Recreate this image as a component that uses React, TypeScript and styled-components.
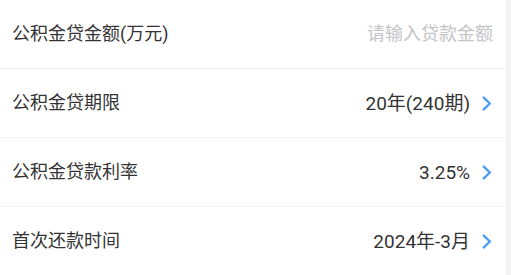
import React from "react";
import styled, { createGlobalStyle } from "styled-components";

const Global = createGlobalStyle`
  html, body { margin: 0; padding: 0; background: #ffffff; }
  body { font-family: Roboto, "Noto Sans CJK SC", sans-serif; }
`;

const Page = styled.div`
  display: flex;
  width: 511px;
  height: 275px;
  overflow: hidden;
  background: #ffffff;
`;

const List = styled.div`
  flex: 1;
  display: flex;
  flex-direction: column;
`;

const Gutter = styled.div`
  width: 5px;
  background: #f3f3f3;
`;

const Row = styled.div`
  flex: 0 0 68px;
  display: flex;
  align-items: center;
  justify-content: space-between;
  padding: 0 14px 0 12px;
  border-bottom: 1px solid #f1f1f1;
`;

const Label = styled.span`
  font-size: 18px;
  color: #333333;
  line-height: 1;
`;

const Right = styled.div`
  display: flex;
  align-items: center;
  gap: 12px;
`;

const Value = styled.span<{ $placeholder?: boolean }>`
  font-size: ${(p) => (p.$placeholder ? "18px" : "19px")};
  line-height: 1;
  color: ${(p) => (p.$placeholder ? "#c4c4c6" : "#333333")};
  margin-right: ${(p) => (p.$placeholder ? "-1px" : "0")};
`;

const Chevron = () => (
  <svg width="10" height="15" viewBox="0 0 10 15" style={{ display: "block" }}>
    <polyline
      points="1.8,1.6 7.9,7.5 1.8,13.4"
      fill="none"
      stroke="#4a9cf6"
      strokeWidth="2.4"
      strokeLinecap="round"
      strokeLinejoin="round"
    />
  </svg>
);

const rows: { label: string; value: string; placeholder?: boolean; arrow?: boolean }[] = [
  { label: "公积金贷金额(万元)", value: "请输入贷款金额", placeholder: true },
  { label: "公积金贷期限", value: "20年(240期)", arrow: true },
  { label: "公积金贷款利率", value: "3.25%", arrow: true },
  { label: "首次还款时间", value: "2024年-3月", arrow: true },
];

export default function App() {
  return (
    <>
      <Global />
      <Page>
        <List>
          {rows.map((r) => (
            <Row key={r.label}>
              <Label>{r.label}</Label>
              <Right>
                <Value $placeholder={r.placeholder}>{r.value}</Value>
                {r.arrow && <Chevron />}
              </Right>
            </Row>
          ))}
        </List>
        <Gutter />
      </Page>
    </>
  );
}
